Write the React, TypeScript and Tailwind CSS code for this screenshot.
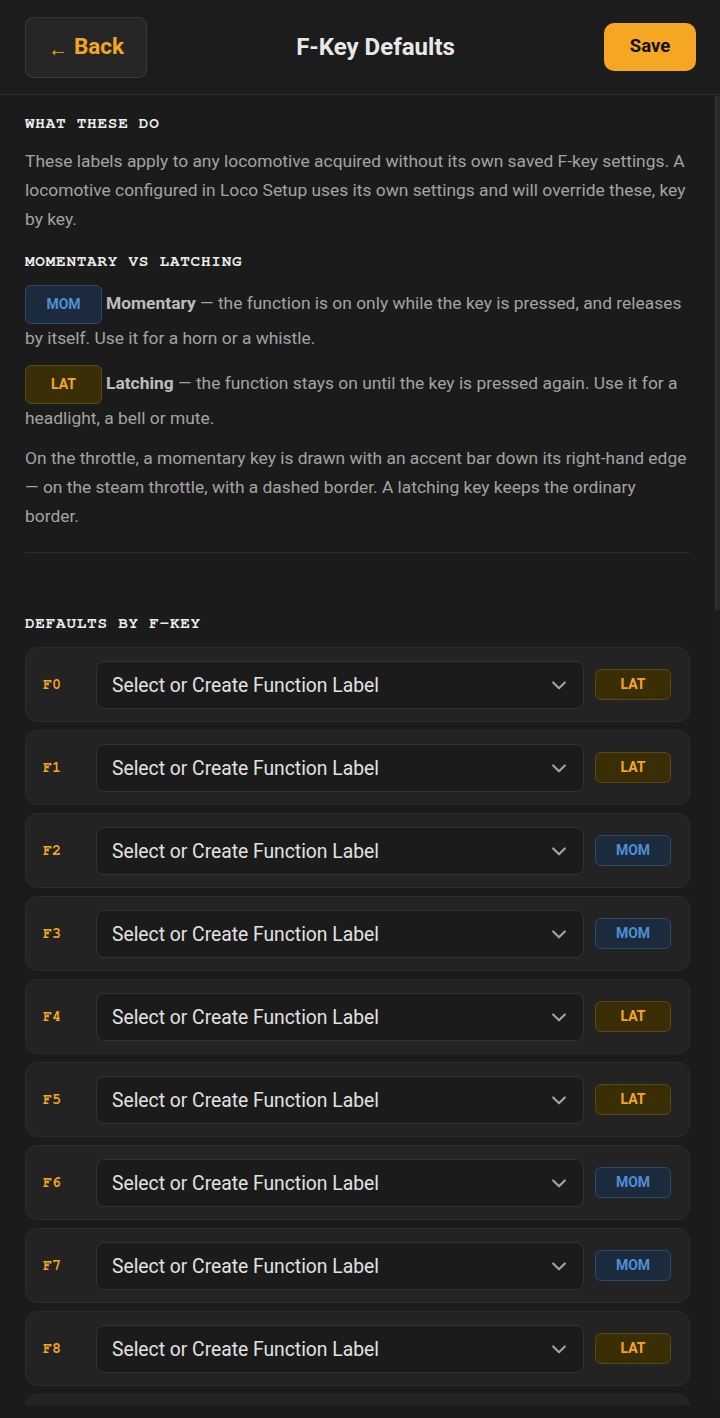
import React from "react";

type Mode = "LAT" | "MOM";

const modes: Mode[] = [
  "LAT", "LAT", "MOM", "MOM", "LAT", "LAT", "MOM", "MOM", "LAT", "LAT",
  "LAT", "LAT", "LAT", "LAT", "LAT", "LAT", "LAT", "LAT", "LAT", "LAT",
];

const mono = { fontFamily: '"Nimbus Mono PS", "Nimbus Mono L", "FreeMono", Courier, "Courier New", monospace' };

function Chevron() {
  return (
    <svg width="20" height="20" viewBox="0 0 24 24" fill="none" stroke="#a3a3a3" strokeWidth="2.6" strokeLinecap="round" strokeLinejoin="round">
      <path d="M5 9l7 7 7-7" />
    </svg>
  );
}

function Badge({ mode }: { mode: Mode }) {
  const cls =
    mode === "LAT"
      ? "bg-[#3a2e06] border-[#5c4712] text-[#f5a623]"
      : "bg-[#1b2a3c] border-[#2c4a6a] text-[#4d8fd6]";
  return (
    <div className={`w-[76px] h-[31px] shrink-0 rounded-[6px] border flex items-center justify-center text-[14px] font-bold ${cls}`}>
      {mode}
    </div>
  );
}

function Row({ idx, mode }: { idx: number; mode: Mode }) {
  return (
    <div className="flex items-center rounded-[12px] border border-[#2b2b2b] bg-[#232323] pl-[17px] pr-[18px] h-[75px] shrink-0">
      <div className="w-[41px] shrink-0 text-[15px] font-bold text-[#f5a623] mt-[1px]" style={mono}>
        F{idx}
      </div>
      <div className="ml-[12px] flex-1 h-[48px] flex items-center justify-between rounded-[8px] border border-[#333333] bg-[#1b1b1b] pl-[15px] pr-[14px]">
        <span className="text-[19.3px] text-[#e2e2e2] mt-[3px]">Select or Create Function Label</span>
        <Chevron />
      </div>
      <div className="ml-[11px]">
        <Badge mode={mode} />
      </div>
    </div>
  );
}

function InlineBadge({ mode }: { mode: Mode }) {
  const cls =
    mode === "LAT"
      ? "bg-[#3a2e06] border-[#5c4712] text-[#f5a623]"
      : "bg-[#1b2a3c] border-[#2c4a6a] text-[#4d8fd6]";
  return (
    <span className={`inline-block w-[77px] text-center py-[9px] leading-[19px] rounded-[6px] border text-[14px] font-bold mr-[4px] ${cls}`}>
      {mode}
    </span>
  );
}

export default function App() {
  return (
    <div className="w-[720px] h-[1418px] flex flex-col bg-[#1b1b1b] overflow-hidden" style={{ fontFamily: 'Roboto, "Noto Sans", sans-serif' }}>
      <header className="shrink-0 flex items-center justify-between h-[95px] px-[25px] border-b border-[#2e2e2e] bg-[#1c1c1c]">
        <button className="h-[61px] w-[122px] rounded-[8px] border border-[#383838] bg-[#262626] text-[#f5a623] font-bold flex items-center justify-center gap-[6px]">
          <span className="text-[20px] mt-[4px]">←</span>
          <span className="text-[22.5px]">Back</span>
        </button>
        <h1 className="text-[24px] font-bold text-[#e8e8e8]">F-Key Defaults</h1>
        <button className="h-[48px] w-[92px] mr-[-1px] rounded-[10px] bg-[#f5a623] text-[#111111] text-[18.5px] font-bold">
          Save
        </button>
      </header>
      <div className="flex-1 min-h-0 flex">
        <div className="flex-1 min-w-0 overflow-hidden">
          <div className="px-[25px] pt-[16px] pb-[120px]">
            <h2 className="text-[16px] font-bold tracking-[0.75px] text-[#ececec] mb-[12px]" style={mono}>
              WHAT THESE DO
            </h2>
            <p className="text-[17.4px] leading-[29px] text-[#a3a3a3] mb-[10px]">
              These labels apply to any locomotive acquired without its own saved F-key settings. A locomotive configured in Loco Setup uses its own settings and will override these, key by key.
            </p>
            <h2 className="mt-[15px] text-[16px] font-bold tracking-[0.75px] text-[#ececec] mb-[12px]" style={mono}>
              MOMENTARY VS LATCHING
            </h2>
            <p className="text-[17.4px] leading-[29px] text-[#a3a3a3] mb-[12px]">
              <InlineBadge mode="MOM" />
              <b className="font-bold text-[#bdbdbd]">Momentary</b> — the function is on only while the key is pressed, and releases by itself. Use it for a horn or a whistle.
            </p>
            <p className="text-[17.4px] leading-[29px] text-[#a3a3a3] mb-[11px]">
              <InlineBadge mode="LAT" />
              <b className="font-bold text-[#bdbdbd]">Latching</b> — the function stays on until the key is pressed again. Use it for a headlight, a bell or mute.
            </p>
            <p className="text-[17.4px] leading-[29px] text-[#a3a3a3]">
              On the throttle, a momentary key is drawn with an accent bar down its right-hand edge — on the steam throttle, with a dashed border. A latching key keeps the ordinary border.
            </p>
            <div className="mt-[21px] h-px bg-[#2c2c2c]" />
            <h2 className="mt-[58px] text-[16px] font-bold tracking-[0.75px] text-[#ececec] mb-[12px]" style={mono}>
              DEFAULTS BY F-KEY
            </h2>
            <div className="flex flex-col gap-[8px]">
              {modes.map((m, i) => (
                <Row key={i} idx={i} mode={m} />
              ))}
            </div>
          </div>
        </div>
        <div className="w-[5px] shrink-0 bg-[#1c1c1c] flex flex-col">
          <div className="mt-[1px] h-[514px] bg-[#2a2a2a] border-l border-[#363636]" />
        </div>
      </div>
      <div className="shrink-0 h-[13px] bg-[#1b1b1b]" />
    </div>
  );
}
